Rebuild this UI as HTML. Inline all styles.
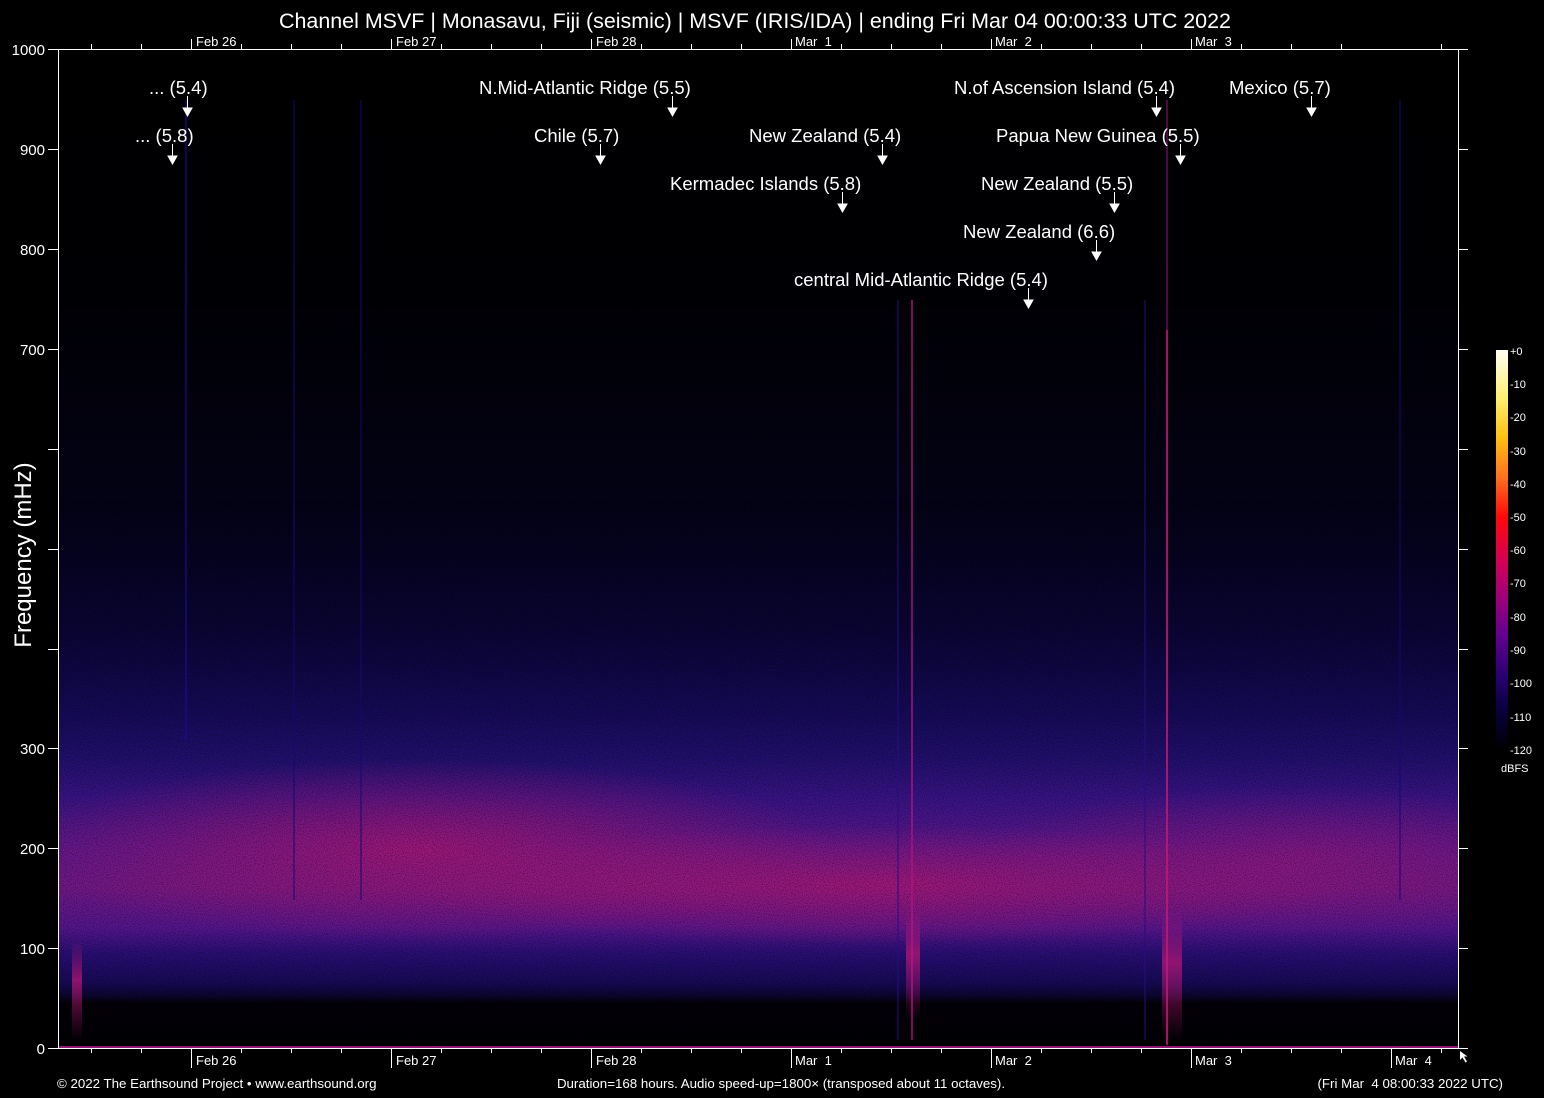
<!DOCTYPE html>
<html><head><meta charset="utf-8"><style>
html,body{margin:0;padding:0;background:#000;width:1544px;height:1098px;overflow:hidden}
svg text{font-family:"Liberation Sans",sans-serif;fill:#fff}
</style></head><body>
<svg width="1544" height="1098" viewBox="0 0 1544 1098" xmlns="http://www.w3.org/2000/svg">
<defs>
<linearGradient id="v" x1="0" y1="49" x2="0" y2="1048" gradientUnits="userSpaceOnUse">
<stop offset="0" stop-color="#000000"/>
<stop offset="0.25" stop-color="#000004"/>
<stop offset="0.45" stop-color="#030214"/>
<stop offset="0.58" stop-color="#0a0535"/>
<stop offset="0.66" stop-color="#150a58"/>
<stop offset="0.71" stop-color="#221070"/>
<stop offset="0.75" stop-color="#3a1488"/>
<stop offset="0.80" stop-color="#5e1890"/>
<stop offset="0.84" stop-color="#70198a"/>
<stop offset="0.88" stop-color="#561690"/>
<stop offset="0.905" stop-color="#2a0f78"/>
<stop offset="0.935" stop-color="#170a58"/>
<stop offset="0.948" stop-color="#0c0630"/>
<stop offset="0.955" stop-color="#030108"/>
<stop offset="1" stop-color="#010004"/>
</linearGradient>
<radialGradient id="m1" cx="420" cy="850" r="260" gradientUnits="userSpaceOnUse" gradientTransform="translate(420 850) scale(1.6 0.35) translate(-420 -850)">
<stop offset="0" stop-color="#b01878" stop-opacity="0.8"/>
<stop offset="1" stop-color="#b01878" stop-opacity="0"/>
</radialGradient>
<radialGradient id="m2" cx="880" cy="885" r="300" gradientUnits="userSpaceOnUse" gradientTransform="translate(880 885) scale(1.6 0.2) translate(-880 -885)">
<stop offset="0" stop-color="#b81878" stop-opacity="0.7"/>
<stop offset="1" stop-color="#b81878" stop-opacity="0"/>
</radialGradient>
<radialGradient id="m3" cx="1300" cy="860" r="250" gradientUnits="userSpaceOnUse" gradientTransform="translate(1300 860) scale(1.3 0.3) translate(-1300 -860)">
<stop offset="0" stop-color="#a01880" stop-opacity="0.6"/>
<stop offset="1" stop-color="#a01880" stop-opacity="0"/>
</radialGradient>
<linearGradient id="cb" x1="0" y1="350" x2="0" y2="748" gradientUnits="userSpaceOnUse">
<stop offset="0" stop-color="#fffff4"/>
<stop offset="0.12" stop-color="#fff070"/>
<stop offset="0.22" stop-color="#ffc010"/>
<stop offset="0.32" stop-color="#ff7020"/>
<stop offset="0.42" stop-color="#ff0808"/>
<stop offset="0.52" stop-color="#d80050"/>
<stop offset="0.62" stop-color="#a0007a"/>
<stop offset="0.72" stop-color="#600090"/>
<stop offset="0.82" stop-color="#280070"/>
<stop offset="0.90" stop-color="#080040"/>
<stop offset="1" stop-color="#000004"/>
</linearGradient>
<linearGradient id="ev" x1="0" y1="0" x2="0" y2="1">
<stop offset="0" stop-color="#c01878" stop-opacity="0"/>
<stop offset="0.4" stop-color="#c01878" stop-opacity="0.7"/>
<stop offset="1" stop-color="#c01878" stop-opacity="0"/>
</linearGradient>
<filter id="nz" x="0" y="0" width="100%" height="100%">
<feTurbulence type="fractalNoise" baseFrequency="0.9" numOctaves="1" seed="3"/>
<feColorMatrix values="0 0 0 0 0  0 0 0 0 0  0 0 0 0 0  0 0 0 -2.2 1.3"/>
</filter>
</defs>
<rect x="58" y="49" width="1400" height="999" fill="url(#v)"/>
<rect x="58" y="700" width="1400" height="300" fill="url(#m1)"/>
<rect x="58" y="700" width="1400" height="300" fill="url(#m2)"/>
<rect x="58" y="700" width="1400" height="300" fill="url(#m3)"/>
<rect x="58" y="500" width="1400" height="548" filter="url(#nz)" opacity="0.5"/>
<g stroke-width="2">
<line x1="912" y1="300" x2="912" y2="1040" stroke="#b0157a" opacity="0.7"/>
<line x1="1167" y1="330" x2="1167" y2="1045" stroke="#c01870" opacity="0.85"/>
<line x1="1167" y1="100" x2="1167" y2="330" stroke="#801070" opacity="0.6"/>
<line x1="186" y1="100" x2="186" y2="740" stroke="#1a0c90" opacity="0.6"/>
<line x1="294" y1="100" x2="294" y2="900" stroke="#140a70" opacity="0.5"/>
<line x1="361" y1="100" x2="361" y2="900" stroke="#140a70" opacity="0.5"/>
<line x1="898" y1="300" x2="898" y2="1040" stroke="#2a0c80" opacity="0.5"/>
<line x1="1145" y1="300" x2="1145" y2="1040" stroke="#2a0c80" opacity="0.5"/>
<line x1="1400" y1="100" x2="1400" y2="900" stroke="#140a70" opacity="0.5"/>
</g>
<rect x="906" y="910" width="14" height="110" fill="url(#ev)"/>
<rect x="1162" y="910" width="20" height="130" fill="url(#ev)"/>
<rect x="72" y="940" width="10" height="100" fill="url(#ev)"/>
<line x1="58" y1="1047" x2="1458" y2="1047" stroke="#c020a0" stroke-width="1.5"/>
<g stroke="#fff" stroke-width="1">
<line x1="58.5" y1="49" x2="58.5" y2="1048"/>
<line x1="1458.5" y1="49" x2="1458.5" y2="1048"/>
<line x1="58" y1="49.5" x2="1458" y2="49.5"/>
<line x1="58" y1="1048.5" x2="1458" y2="1048.5"/>
<path d="M48 49.5h10M48 149.5h10M48 249.5h10M48 349.5h10M48 449.5h10M48 549.5h10M48 649.5h10M48 748.5h10M48 848.5h10M48 948.5h10M48 1048.5h10"/>
<path d="M1458 49.5h10M1458 149.5h10M1458 249.5h10M1458 349.5h10M1458 449.5h10M1458 549.5h10M1458 649.5h10M1458 748.5h10M1458 848.5h10M1458 948.5h10M1458 1048.5h10"/>
<path d="M91.5 49v-5M141.5 49v-5M241.5 49v-5M291.5 49v-5M341.5 49v-5M441.5 49v-5M491.5 49v-5M541.5 49v-5M641.5 49v-5M691.5 49v-5M741.5 49v-5M841.5 49v-5M891.5 49v-5M941.5 49v-5M1041.5 49v-5M1091.5 49v-5M1141.5 49v-5M1241.5 49v-5M1291.5 49v-5M1341.5 49v-5M1441.5 49v-5"/>
<path d="M191.5 49v-10M391.5 49v-10M591.5 49v-10M791.5 49v-10M991.5 49v-10M1191.5 49v-10"/>
<path d="M91.5 1048v5M141.5 1048v5M241.5 1048v5M291.5 1048v5M341.5 1048v5M441.5 1048v5M491.5 1048v5M541.5 1048v5M641.5 1048v5M691.5 1048v5M741.5 1048v5M841.5 1048v5M891.5 1048v5M941.5 1048v5M1041.5 1048v5M1091.5 1048v5M1141.5 1048v5M1241.5 1048v5M1291.5 1048v5M1341.5 1048v5M1441.5 1048v5"/>
<path d="M191.5 1048v20M391.5 1048v20M591.5 1048v20M791.5 1048v20M991.5 1048v20M1191.5 1048v20M1391.5 1048v20"/>
</g>
<path d="M1460 1051v9l2.5-2.5 3 5 1.5-1-3-5h3.5z" fill="#fff"/>
<text x="755" y="28" font-size="21.45" text-anchor="middle">Channel MSVF | Monasavu, Fiji (seismic) | MSVF (IRIS/IDA) | ending Fri Mar 04 00:00:33 UTC 2022</text>
<g font-size="13">
<text x="196" y="46">Feb 26</text><text x="396" y="46">Feb 27</text><text x="596" y="46">Feb 28</text><text x="795" y="46" xml:space="preserve">Mar  1</text><text x="995" y="46" xml:space="preserve">Mar  2</text><text x="1195" y="46" xml:space="preserve">Mar  3</text>
<text x="196" y="1065">Feb 26</text><text x="396" y="1065">Feb 27</text><text x="596" y="1065">Feb 28</text><text x="795" y="1065" xml:space="preserve">Mar  1</text><text x="995" y="1065" xml:space="preserve">Mar  2</text><text x="1195" y="1065" xml:space="preserve">Mar  3</text><text x="1395" y="1065" xml:space="preserve">Mar  4</text>
</g>
<g font-size="15" text-anchor="end">
<text x="45" y="55">1000</text><text x="45" y="155">900</text><text x="45" y="255">800</text><text x="45" y="355">700</text><text x="45" y="754">300</text><text x="45" y="854">200</text><text x="45" y="954">100</text><text x="45" y="1054">0</text>
</g>
<text transform="translate(31 555) rotate(-90)" font-size="24" text-anchor="middle">Frequency (mHz)</text>
<g font-size="13.3">
<text x="57" y="1088">© 2022 The Earthsound Project • www.earthsound.org</text>
<text x="781" y="1088" text-anchor="middle">Duration=168 hours. Audio speed-up=1800× (transposed about 11 octaves).</text>
<text x="1503" y="1088" text-anchor="end" xml:space="preserve">(Fri Mar  4 08:00:33 2022 UTC)</text>
</g>
<rect x="1496" y="350" width="12" height="398" fill="url(#cb)"/>
<g font-size="11" style="font-family:'Liberation Mono',monospace">
<text x="1510" y="355">+0</text><text x="1510" y="388">-10</text><text x="1510" y="421">-20</text><text x="1510" y="455">-30</text><text x="1510" y="488">-40</text><text x="1510" y="521">-50</text><text x="1510" y="554">-60</text><text x="1510" y="587">-70</text><text x="1510" y="621">-80</text><text x="1510" y="654">-90</text><text x="1510" y="687">-100</text><text x="1510" y="721">-110</text><text x="1510" y="754">-120</text><text x="1501" y="772">dBFS</text>
</g>
<g font-size="18.5">
<text x="149" y="94">... (5.4)</text>
<text x="135" y="142">... (5.8)</text>
<text x="479" y="94">N.Mid-Atlantic Ridge (5.5)</text>
<text x="534" y="142">Chile (5.7)</text>
<text x="749" y="142">New Zealand (5.4)</text>
<text x="670" y="190">Kermadec Islands (5.8)</text>
<text x="954" y="94">N.of Ascension Island (5.4)</text>
<text x="996" y="142">Papua New Guinea (5.5)</text>
<text x="981" y="190">New Zealand (5.5)</text>
<text x="963" y="238">New Zealand (6.6)</text>
<text x="794" y="286">central Mid-Atlantic Ridge (5.4)</text>
<text x="1229" y="94">Mexico (5.7)</text>
</g>
<g stroke="#fff" stroke-width="1" fill="#fff">
<path d="M187.5 96v12M183 108h9l-4.5 8z"/>
<path d="M172.5 144v12M168 156h9l-4.5 8z"/>
<path d="M672.5 96v12M668 108h9l-4.5 8z"/>
<path d="M600.5 144v12M596 156h9l-4.5 8z"/>
<path d="M882.5 144v12M878 156h9l-4.5 8z"/>
<path d="M842.5 192v12M838 204h9l-4.5 8z"/>
<path d="M1156.5 96v12M1152 108h9l-4.5 8z"/>
<path d="M1180.5 144v12M1176 156h9l-4.5 8z"/>
<path d="M1114.5 192v12M1110 204h9l-4.5 8z"/>
<path d="M1096.5 240v12M1092 252h9l-4.5 8z"/>
<path d="M1028.5 288v12M1024 300h9l-4.5 8z"/>
<path d="M1311.5 96v12M1307 108h9l-4.5 8z"/>
</g>
</svg>
</body></html>
